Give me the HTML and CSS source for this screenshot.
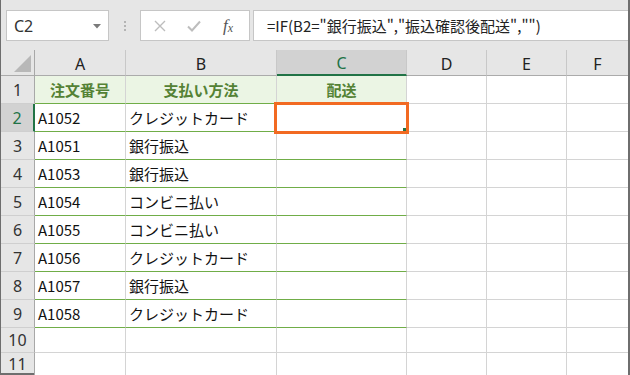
FILE: index.html
```html
<!DOCTYPE html>
<html lang="ja">
<head>
<meta charset="utf-8">
<link rel="stylesheet" href="styles.css">
</head>
<body>
<div class="app">
  <div class="toolbar">
    <div class="namebox">
      <span class="ref">C2</span>
      <svg class="caret" width="8" height="5" viewBox="0 0 8 5"><path d="M0 0H8L4 4.5Z" fill="#7a7a7a"/></svg>
    </div>
    <div class="dots"><i></i><i></i><i></i></div>
    <div class="fnbox">
      <svg class="btn" width="14" height="14" viewBox="0 0 14 14"><path d="M2 2L12 12M12 2L2 12" stroke="#bdbdbd" stroke-width="1.4" fill="none"/></svg>
      <svg class="btn" width="16" height="14" viewBox="0 0 16 14"><path d="M2 7.5L6 11.5L14 2.5" stroke="#bdbdbd" stroke-width="2" fill="none"/></svg>
      <span class="fx">f<sub>x</sub></span>
    </div>
    <div class="formula">=IF(B2="銀行振込","振込確認後配送","")</div>
  </div>
  <div class="grid">
    <div class="corner"><svg width="17" height="17" viewBox="0 0 17 17"><path d="M17 0V17H0Z" fill="#b8b8b8"/></svg></div>
    <div class="ch">A</div>
    <div class="ch">B</div>
    <div class="ch active">C</div>
    <div class="ch">D</div>
    <div class="ch">E</div>
    <div class="ch last">F</div>

    <div class="rh">1</div>
    <div class="c hd g">注文番号</div>
    <div class="c hd g">支払い方法</div>
    <div class="c hd g">配送</div>
    <div class="c"></div><div class="c"></div><div class="c last"></div>

    <div class="rh active">2</div>
    <div class="c g">A1052</div>
    <div class="c g">クレジットカード</div>
    <div class="c g"></div>
    <div class="c"></div><div class="c"></div><div class="c last"></div>

    <div class="rh">3</div>
    <div class="c g">A1051</div>
    <div class="c g">銀行振込</div>
    <div class="c g"></div>
    <div class="c"></div><div class="c"></div><div class="c last"></div>

    <div class="rh">4</div>
    <div class="c g">A1053</div>
    <div class="c g">銀行振込</div>
    <div class="c g"></div>
    <div class="c"></div><div class="c"></div><div class="c last"></div>

    <div class="rh">5</div>
    <div class="c g">A1054</div>
    <div class="c g">コンビニ払い</div>
    <div class="c g"></div>
    <div class="c"></div><div class="c"></div><div class="c last"></div>

    <div class="rh">6</div>
    <div class="c g">A1055</div>
    <div class="c g">コンビニ払い</div>
    <div class="c g"></div>
    <div class="c"></div><div class="c"></div><div class="c last"></div>

    <div class="rh">7</div>
    <div class="c g">A1056</div>
    <div class="c g">クレジットカード</div>
    <div class="c g"></div>
    <div class="c"></div><div class="c"></div><div class="c last"></div>

    <div class="rh">8</div>
    <div class="c g">A1057</div>
    <div class="c g">銀行振込</div>
    <div class="c g"></div>
    <div class="c"></div><div class="c"></div><div class="c last"></div>

    <div class="rh">9</div>
    <div class="c g">A1058</div>
    <div class="c g">クレジットカード</div>
    <div class="c g"></div>
    <div class="c"></div><div class="c"></div><div class="c last"></div>

    <div class="rh">10</div>
    <div class="c"></div><div class="c"></div><div class="c"></div>
    <div class="c"></div><div class="c"></div><div class="c last"></div>

    <div class="rh">11</div>
    <div class="c"></div><div class="c"></div><div class="c"></div>
    <div class="c"></div><div class="c"></div><div class="c last"></div>

    <div class="selection"><span class="handle"></span></div>
  </div>
</div>
</body>
</html>
```
FILE: styles.css
```css
* { box-sizing: border-box; }
html, body { margin: 0; padding: 0; }
body {
  width: 630px;
  height: 375px;
  overflow: hidden;
  font-family: "Noto Sans CJK JP", "Noto Sans", sans-serif;
  background: #fff;
}
.app {
  width: 630px;
  height: 375px;
  border-left: 1px solid #6e6e6e;
  border-right: 2px solid #6e6e6e;
  border-bottom: 2px solid #6e6e6e;
  display: flex;
  flex-direction: column;
  background: #e6e6e6;
}
.toolbar {
  height: 50px;
  flex: none;
  display: flex;
  align-items: flex-start;
  padding-top: 10px;
  padding-left: 5px;
}
.namebox {
  width: 103px;
  height: 31px;
  background: #fff;
  border: 1px solid #c6c6c6;
  display: flex;
  align-items: center;
  justify-content: space-between;
  padding: 0 7px 0 7px;
}
.ref {
  font-family: "Noto Sans", sans-serif;
  font-size: 16px;
  color: #333;
}
.caret { margin-top: 1px; }
.dots {
  width: 31px;
  height: 31px;
  display: flex;
  flex-direction: column;
  align-items: center;
  justify-content: center;
  gap: 2px;
}
.dots i {
  display: block;
  width: 2px;
  height: 2px;
  background: #b4b4b4;
}
.fnbox {
  width: 110px;
  height: 31px;
  background: #fff;
  border: 1px solid #c6c6c6;
  display: flex;
  align-items: center;
  padding-left: 12px;
}
.fnbox .btn:nth-child(1) { margin-right: 19px; }
.fnbox .btn:nth-child(2) { margin-right: 21px; }
.fx {
  font-family: "Liberation Serif", serif;
  font-style: italic;
  font-size: 17px;
  color: #555;
  line-height: 1;
}
.fx sub {
  font-size: 12px;
  vertical-align: baseline;
  position: relative;
  top: 1px;
}
.formula {
  flex: 1;
  height: 31px;
  margin-left: 3px;
  background: #fff;
  border: 1px solid #c6c6c6;
  border-right: none;
  font-size: 15px;
  line-height: 29px;
  padding-left: 13px;
  color: #222;
  white-space: nowrap;
}
.grid {
  flex: 1;
  position: relative;
  display: grid;
  grid-template-columns: 34px 91px 151px 130px 80px 80px 1fr;
  grid-template-rows: 26px repeat(9, 28px) 25px 1fr;
}
.corner {
  border-right: 1px solid #a8a8a8;
  border-bottom: 1px solid #ababab;
  display: flex;
  align-items: flex-end;
  justify-content: flex-end;
  padding: 0 3px 3px 0;
}
.ch {
  border-right: 1px solid #c8c8c8;
  border-bottom: 1px solid #ababab;
  font-family: "Noto Sans", sans-serif;
  font-size: 16px;
  color: #222;
  display: flex;
  align-items: center;
  justify-content: center;
  padding-top: 2px;
  background: #e6e6e6;
}
.ch.last { border-right: none; }
.ch.active {
  background: #d2d2d2;
  color: #217346;
  border-bottom: 2px solid #217346;
}
.rh {
  border-right: 1px solid #a8a8a8;
  border-bottom: 1px solid #cfcfcf;
  font-family: "Noto Sans", sans-serif;
  font-size: 16px;
  color: #333;
  display: flex;
  align-items: center;
  justify-content: center;
}
.rh.active {
  background: #d2d2d2;
  color: #217346;
  border-right: 2px solid #217346;
}
.c {
  background: #fff;
  border-right: 1px solid #d4d4d4;
  border-bottom: 1px solid #d4d4d4;
  font-size: 15px;
  color: #111;
  display: flex;
  align-items: center;
  padding-left: 3px;
  white-space: nowrap;
}
.c.last { border-right: none; }
.c.g { border-bottom-color: #70ad47; }
.c.hd {
  background: #ebf5e4;
  color: #548235;
  font-weight: bold;
  justify-content: center;
  padding-left: 0;
}
.selection {
  position: absolute;
  left: 273px;
  top: 52px;
  width: 135px;
  height: 32px;
  border: 3px solid #f26a22;
}
.handle {
  position: absolute;
  right: 0;
  bottom: 0;
  width: 3px;
  height: 3px;
  background: #217346;
}
```
